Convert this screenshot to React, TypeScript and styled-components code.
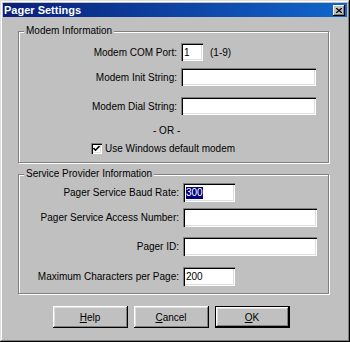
import React from 'react';
import styled, { createGlobalStyle } from 'styled-components';

const GlobalStyle = createGlobalStyle`
    html, body {
        margin: 0;
        padding: 0;
        background: #c0c0c0;
    }
    body {
        font-family: "Liberation Sans", Arial, sans-serif;
        font-size: 10px;
        color: #000;
    }
`;

const Window = styled.div`
    width: 350px;
    height: 342px;
    box-sizing: border-box;
    padding: 3px;
    background: #c0c0c0;
    box-shadow: inset -1px -1px #000, inset 1px 1px #dfdfdf,
        inset -2px -2px #808080, inset 2px 2px #fff;
    display: flex;
    flex-direction: column;
`;

const TitleBar = styled.div`
    height: 14px;
    display: flex;
    align-items: center;
    justify-content: space-between;
    padding: 0 2px 0 1px;
    background: linear-gradient(to right, #0a1f7a, #1066cc);
    color: #fff;
    font-size: 11px;
    font-weight: bold;
`;

const CloseButton = styled.div`
    width: 12px;
    height: 11px;
    background: #c0c0c0;
    box-shadow: inset -1px -1px #000, inset 1px 1px #fff, inset -2px -2px #808080;
    display: flex;
    align-items: center;
    justify-content: center;
`;

const Body = styled.div`
    padding: 8px 18px 0 15px;
    display: flex;
    flex-direction: column;
`;

const Group = styled.fieldset<{ $pad: string; $mt?: number }>`
    margin: ${p => p.$mt || 0}px 0 0 0;
    padding: ${p => p.$pad};
    min-width: 0;
    border: 1px solid #808080;
    box-shadow: inset 1px 1px #fff, 1px 1px #fff;
    display: flex;
    flex-direction: column;
`;

const Legend = styled.legend`
    margin-left: 5px;
    padding: 0 2px;
    font-size: 10px;
    line-height: 12px;
    background: #c0c0c0;
`;

const Row = styled.div<{ $mt?: number }>`
    display: flex;
    align-items: center;
    gap: 4px;
    margin-top: ${p => p.$mt || 0}px;
`;

const Label = styled.div<{ $w: number }>`
    width: ${p => p.$w}px;
    text-align: right;
    white-space: nowrap;
`;

const Field = styled.div<{ $w: number; $h: number }>`
    width: ${p => p.$w}px;
    height: ${p => p.$h}px;
    box-sizing: border-box;
    padding: 0 2px 0 3px;
    background: #fff;
    box-shadow: inset 1px 1px #808080, inset 2px 2px #000,
        inset -1px -1px #fff, inset -2px -2px #dfdfdf;
    display: flex;
    align-items: center;
    white-space: nowrap;
`;

const Selected = styled.span`
    background: #000080;
    color: #fff;
    line-height: 12px;
`;

const Hint = styled.span`
    margin-left: 3px;
`;

const OrLine = styled.div`
    margin-top: 10px;
    padding-left: 134px;
    line-height: 12px;
`;

const CheckRow = styled.div`
    margin-top: 5px;
    padding-left: 72px;
    display: flex;
    align-items: center;
    gap: 3px;
    line-height: 13px;
`;

const CheckBox = styled.div`
    width: 11px;
    height: 11px;
    box-sizing: border-box;
    background: #fff;
    box-shadow: inset 1px 1px #808080, inset 2px 2px #000,
        inset -1px -1px #fff, inset -2px -2px #dfdfdf;
    display: flex;
    align-items: center;
    justify-content: center;
`;

const ButtonRow = styled.div`
    margin-top: 12px;
    padding-right: 5px;
    display: flex;
    justify-content: center;
    gap: 6px;
`;

const Button = styled.div<{ $default?: boolean }>`
    width: 75px;
    height: 22px;
    box-sizing: border-box;
    display: flex;
    align-items: center;
    justify-content: center;
    background: #c0c0c0;
    border: ${p => (p.$default ? '1px solid #000' : 'none')};
    box-shadow: inset -1px -1px #000, inset 1px 1px #fff,
        inset -2px -2px #808080, inset 2px 2px #dfdfdf;
`;

const App = () => {
    return (
        <>
            <GlobalStyle />
            <Window>
                <TitleBar>
                    <span>Pager Settings</span>
                    <CloseButton>
                        <svg width="6" height="5" viewBox="0 0 6 5">
                            <path d="M0 0 L6 5 M6 0 L0 5" stroke="#000" strokeWidth="1.3" />
                        </svg>
                    </CloseButton>
                </TitleBar>
                <Body>
                    <Group $pad="6px 0 7px 0">
                        <Legend>Modem Information</Legend>
                        <Row>
                            <Label $w={158}>Modem COM Port:</Label>
                            <Field $w={22} $h={18}>1</Field>
                            <Hint>(1-9)</Hint>
                        </Row>
                        <Row $mt={7}>
                            <Label $w={158}>Modem Init String:</Label>
                            <Field $w={135} $h={18} />
                        </Row>
                        <Row $mt={11}>
                            <Label $w={158}>Modem Dial String:</Label>
                            <Field $w={135} $h={18} />
                        </Row>
                        <OrLine>- OR -</OrLine>
                        <CheckRow>
                            <CheckBox>
                                <svg width="7" height="7" viewBox="0 0 7 7">
                                    <path d="M0.5 3 L2.5 5.2 L6.5 1" stroke="#000" strokeWidth="1.6" fill="none" />
                                </svg>
                            </CheckBox>
                            <span>Use Windows default modem</span>
                        </CheckRow>
                    </Group>
                    <Group $pad="3px 0 7px 0" $mt={5}>
                        <Legend>Service Provider Information</Legend>
                        <Row>
                            <Label $w={160}>Pager Service Baud Rate:</Label>
                            <Field $w={52} $h={19}>
                                <Selected>300</Selected>
                            </Field>
                        </Row>
                        <Row $mt={6}>
                            <Label $w={160}>Pager Service Access Number:</Label>
                            <Field $w={134} $h={19} />
                        </Row>
                        <Row $mt={10}>
                            <Label $w={160}>Pager ID:</Label>
                            <Field $w={134} $h={19} />
                        </Row>
                        <Row $mt={11}>
                            <Label $w={160}>Maximum Characters per Page:</Label>
                            <Field $w={52} $h={19}>200</Field>
                        </Row>
                    </Group>
                    <ButtonRow>
                        <Button><span><u>H</u>elp</span></Button>
                        <Button><span><u>C</u>ancel</span></Button>
                        <Button $default><span><u>O</u>K</span></Button>
                    </ButtonRow>
                </Body>
            </Window>
        </>
    );
};

export default App;
